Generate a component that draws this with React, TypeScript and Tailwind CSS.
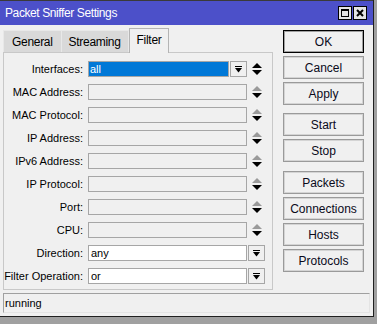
import React from "react";

const rows = [
  { label: "Interfaces:", kind: "iface" },
  { label: "MAC Address:", kind: "empty" },
  { label: "MAC Protocol:", kind: "empty" },
  { label: "IP Address:", kind: "empty" },
  { label: "IPv6 Address:", kind: "empty" },
  { label: "IP Protocol:", kind: "empty" },
  { label: "Port:", kind: "empty" },
  { label: "CPU:", kind: "empty" },
  { label: "Direction:", kind: "select", value: "any" },
  { label: "Filter Operation:", kind: "select", value: "or" },
];

const DropIcon = () => (
  <svg width="7" height="7" viewBox="0 0 7 7">
    <rect x="0" y="0" width="7" height="1" fill="#000" />
    <polygon points="0,2 7,2 3.5,6.5" fill="#000" />
  </svg>
);

const Spinner = ({ active }: { active?: boolean }) => (
  <svg width="10" height="12" viewBox="0 0 10 12" className="ml-[5px]">
    <polygon points="5,0 10,5 0,5" fill={active ? "#000" : "#9a9a9a"} />
    <polygon points="0,7 10,7 5,12" fill="#000" />
  </svg>
);

const DropButton = () => (
  <div className="w-[17px] h-[16px] border border-[#a6a6a6] bg-[#f0f0f0] flex items-center justify-center">
    <DropIcon />
  </div>
);

const Button = ({ label, primary }: { label: string; primary?: boolean }) => (
  <div
    className={`h-[23px] flex items-center justify-center text-[12px] text-[#0a0a1a] bg-[#f0f0f0] ${
      primary ? "border border-black shadow-[inset_0_0_0_1px_#a0a0a0]" : "border border-[#9a9a9a] shadow-[inset_0_0_0_1px_#d4d4d4]"
    }`}
  >
    {label}
  </div>
);

export default function App() {
  return (
    <div className="w-[377px] h-[324px] bg-[#a0a0a0] overflow-hidden font-['Liberation_Sans',Arial,sans-serif] text-[11px] text-black">
      <div className="w-[374px] h-[317px] bg-[#f0f0f0] border-r border-b border-[#202020] flex flex-col">
        {/* Title bar */}
        <div className="h-[25px] bg-[#4c50c9] border-t border-[#3a3a3a] flex items-center justify-between pl-[5px] pr-[6px]">
          <span className="text-white text-[12px] tracking-[-0.4px]">Packet Sniffer Settings</span>
          <div className="flex gap-[1px]">
            <div className="w-[14px] h-[14px] bg-[#e4e4e4] border border-black flex items-center justify-center">
              <svg width="8" height="8" viewBox="0 0 8 8">
                <rect x="0.5" y="0.5" width="7" height="7" fill="none" stroke="#000" />
                <rect x="0" y="0" width="8" height="2" fill="#000" />
              </svg>
            </div>
            <div className="w-[14px] h-[14px] bg-[#e4e4e4] border border-black flex items-center justify-center">
              <svg width="8" height="8" viewBox="0 0 8 8">
                <path d="M1 1 L7 7 M7 1 L1 7" stroke="#000" strokeWidth="2" />
              </svg>
            </div>
          </div>
        </div>

        {/* Body */}
        <div className="flex pl-[3px] pt-[1px]">
          <div className="w-[270px] flex flex-col">
            {/* Tabs */}
            <div className="h-[26px] flex items-end">
              <div className="h-[22px] px-[8px] flex items-center bg-[#d9d9d9] border-t border-l border-r border-[#e8e8e8] text-[12px] tracking-[-0.3px]">
                General
              </div>
              <div className="h-[22px] px-[7px] flex items-center bg-[#d9d9d9] border-t border-r border-[#e8e8e8] text-[12px] tracking-[-0.3px]">
                Streaming
              </div>
              <div className="h-[25px] px-[7px] pb-[3px] flex items-center bg-[#f0f0f0] border-t border-l border-r border-[#b4b4b4] text-[12px] tracking-[-0.3px] -mb-px relative z-10">
                Filter
              </div>
            </div>
            {/* Panel */}
            <div className="h-[238px] border border-[#c8c8c8] bg-[#f0f0f0] pt-[8px] flex flex-col gap-[7px]">
              {rows.map((r) => (
                <div key={r.label} className="h-[16px] flex items-center">
                  <div className="w-[80px] text-right pr-[1px]">{r.label}</div>
                  <div className="ml-[4px] flex items-center">
                    {r.kind === "iface" && (
                      <>
                        <div className="w-[141px] h-[16px] border border-[#a6a6a6] bg-[#0078d7] text-white flex items-center pl-[1px]">
                          all
                        </div>
                        <div className="ml-[1px]">
                          <DropButton />
                        </div>
                        <Spinner active />
                      </>
                    )}
                    {r.kind === "empty" && (
                      <>
                        <div className="w-[159px] h-[16px] border border-[#a6a6a6] bg-[#f0f0f0]" />
                        <Spinner />
                      </>
                    )}
                    {r.kind === "select" && (
                      <>
                        <div className="w-[159px] h-[16px] border border-[#a6a6a6] bg-white flex items-center pl-[2px]">
                          {r.value}
                        </div>
                        <div className="ml-[1px]">
                          <DropButton />
                        </div>
                      </>
                    )}
                  </div>
                </div>
              ))}
            </div>
          </div>

          {/* Buttons */}
          <div className="ml-[10px] w-[81px] pt-[4px] flex flex-col">
            <div className="flex flex-col gap-[3px]">
              <Button label="OK" primary />
              <Button label="Cancel" />
              <Button label="Apply" />
            </div>
            <div className="flex flex-col gap-[3px] mt-[8px]">
              <Button label="Start" />
              <Button label="Stop" />
            </div>
            <div className="flex flex-col gap-[3px] mt-[9px]">
              <Button label="Packets" />
              <Button label="Connections" />
              <Button label="Hosts" />
              <Button label="Protocols" />
            </div>
          </div>
        </div>

        {/* Status bar */}
        <div className="mx-[3px] mt-[3px] w-[367px] h-[20px] border-t border-l border-[#a0a0a0] border-r border-b border-r-[#e4e4e4] border-b-[#e4e4e4] flex items-center pl-[1px]">
          running
        </div>
      </div>
    </div>
  );
}
